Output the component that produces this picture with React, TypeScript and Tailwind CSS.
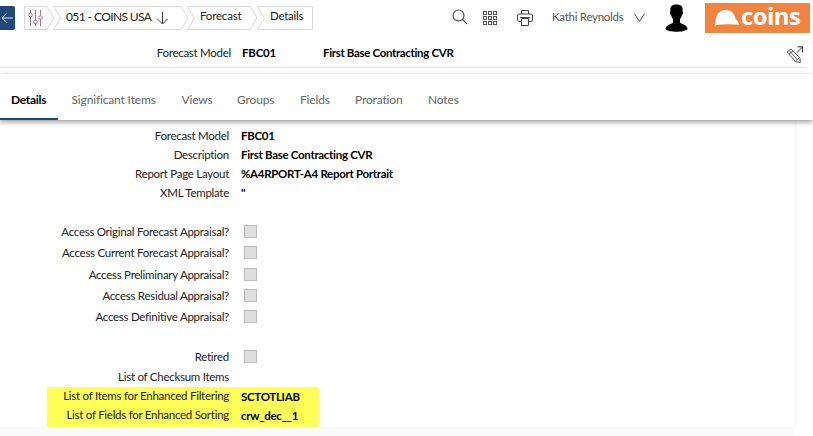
import React from "react";

const tabs = [
  { name: "Significant Items", cls: "w-[110px]" },
  { name: "Views", cls: "w-[55.5px]" },
  { name: "Groups", cls: "w-[63px]" },
  { name: "Fields", cls: "w-[55px]" },
  { name: "Proration", cls: "w-[73px]" },
  { name: "Notes", cls: "w-14" },
];

const details = [
  ["Forecast Model", "FBC01"],
  ["Description", "First Base Contracting CVR"],
  ["Report Page Layout", "%A4RPORT-A4 Report Portrait"],
  ["XML Template", '"'],
];

const access = [
  "Access Original Forecast Appraisal?",
  "Access Current Forecast Appraisal?",
  "Access Preliminary Appraisal?",
  "Access Residual Appraisal?",
  "Access Definitive Appraisal?",
];

function Label({ children }: { children: React.ReactNode }) {
  return <div className="w-[229px] shrink-0 text-right text-[#222]">{children}</div>;
}

function Box() {
  return <div className="ml-[15px] size-[13px] border border-[#bbb] bg-[#dedede]" />;
}

function Breadcrumbs() {
  return (
    <div className="relative ml-[9px] h-6 w-[290px] shrink-0 leading-6 text-[#222]">
      <svg className="absolute inset-0" width="290" height="24" fill="none" stroke="#d8d8d8">
        <path d="M23 .5H.5v23H23M29.500 .5H157M29.500 23.500H157M163.500 .5H226M163.500 23.500H226M233.500 .5H288.500v23H233.500" />
        <path d="M23 .5l7 11.500-7 11.500M29.500 .5l7 11.500-7 11.500M157 .5l7 11.500-7 11.500M163.500 .5l7 11.500-7 11.500M226 .5l7 11.500-7 11.500M233.500 .5l7 11.500-7 11.500" />
      </svg>
      <svg className="absolute left-1 top-1" width="16" height="16" fill="none" stroke="#a5718b">
        <path d="M2.500 0v3M2.500 7v9M7.500 0v10M7.500 14v2M12.500 0v5M12.500 9v7" />
        <circle cx="2.500" cy="5" r="1.800" /><circle cx="7.500" cy="12" r="1.800" /><circle cx="12.500" cy="7.500" r="1.800" />
      </svg>
      <div className="relative -top-[2px] flex whitespace-nowrap">
        <span className="ml-[42px] w-[91px] pt-px text-[12px] tracking-[-.6px]">051 - COINS USA</span>
        <svg className="mt-[8px] w-[11px]" width="11" height="13" fill="none" stroke="#444"><path d="M5.500 0v12M.5 7l5 5 5-5" /></svg>
        <span className="ml-8 w-[70px] tracking-[-.18px]">Forecast</span>
        <span className="tracking-[-.24px]">Details</span>
      </div>
    </div>
  );
}

export default function App() {
  return (
    <div className="h-[436px] w-[813px] overflow-hidden bg-white font-['Lato',sans-serif] text-[11.5px] tracking-[-.27px]">
      <header className="flex h-[37px] pt-[6px]">
        <div className="flex h-6 w-[15px] shrink-0 items-center rounded-r-[2px] bg-[#1f497d]">
          <svg className="ml-px" width="12" height="12" fill="none" stroke="#d5e1ee"><path d="M12 6H1M6 1L1 6l5 5" /></svg>
        </div>
        <Breadcrumbs />
        <svg className="ml-[138px] mt-[3px] shrink-0" width="16" height="17" fill="none" stroke="#444" strokeWidth="1.100"><circle cx="6.500" cy="6.500" r="5.500" /><path d="M10.500 10.500l4.500 4.500" /></svg>
        <svg className="ml-[15px] mt-[5px] shrink-0" width="15" height="15" fill="none" stroke="#555">
          {[0, 5, 10].map((y) => [0, 5, 10].map((x) => <rect key={`${x}-${y}`} x={x + 0.5} y={y + 0.5} width="3" height="3" />))}
        </svg>
        <svg className="ml-[19px] mt-1 shrink-0" width="16" height="16" fill="none" stroke="#444">
          <path d="M4.500 4V.5h7V4M4.500 11.500h-3L.5 10V5l1-1h13l1 1v5l-1 1.500h-3M3 7.500h10" /><path d="M4.500 8.500h7v7h-7z" fill="white" />
        </svg>
        <span className="ml-[19px] w-[82px] shrink-0 pt-[2px] text-[#555]">Kathi Reynolds</span>
        <svg className="mt-[7px] shrink-0" width="12" height="10" fill="none" stroke="#555"><path d="M.5 .5l5 8 5-8" /></svg>
        <svg className="-mt-[2px] ml-[19px] shrink-0" width="24" height="28" fill="#000">
          <path d="M11.500 .5C6.500 .5 4.900 3 5.400 7.500c-1 .5-.3 3.300.7 3.600.4 1.900 1 2.900 1.900 3.900v3.500C6 20.500 1.200 20.500.4 25c2 2.200 6.800 2.700 11.100 2.700S20.600 27.200 22.600 25c-.8-4.500-5.600-4.500-7.600-6.500V15c.9-1 1.500-2 1.900-3.900 1-.3 1.700-3.100.7-3.600.5-4.500-1.100-7-6.100-7z" />
        </svg>
        <div className="-mt-[3px] ml-[16px] flex h-[30px] w-[105px] shrink-0 bg-[#f28440]">
          <svg className="ml-[9px] mt-[7px] shrink-0" width="26" height="16" fill="white">
            <path d="M0 15.400l1.500-2C1.300 5.500 5 0 11.500 0 17 0 20.500 3 21.300 8.500c1.200 1 2.700 3 4.200 6.300-8-1-17-.9-25.500.6z" />
          </svg>
          <span className="ml-[1px] mt-[-2px] font-['Open_Sans',sans-serif] text-[24px] font-bold leading-[30px] tracking-[-.6px] text-white">coins</span>
        </div>
      </header>

      <div className="flex h-[31px] w-[807px] border-b border-[#e4e4e4] pt-[7px]">
        <span className="w-[231px] text-right text-[#222]">Forecast Model</span>
        <b className="ml-[11px] w-[81px] tracking-[-.2px]">FBC01</b>
        <b className="tracking-[-.33px]">First Base Contracting CVR</b>
        <svg className="ml-auto mr-[3px] mt-[2px] shrink-0" width="18" height="18" fill="none" stroke="#333">
          <path d="M11.500 .8h5V6.500M16.500 .8L11 6.500" />
          <path d="M1 6l4-3 9 9 .3 4.500-4.800-.8zM3 8l4-3M3.500 5l8 8.500M9.500 15l4-3.500" strokeWidth=".8" />
        </svg>
      </div>

      <div className="relative mt-[6px] flex h-[46px] border-t border-[#fbfbfb] bg-white pt-4 text-[12px] tracking-[-.15px] text-[#666] shadow-[0_2px_5px_rgba(0,0,0,.4)]">
        <div className="-mt-4 mr-[13.5px] w-[58px] border-b-2 border-[#1f497d] pl-[11px] pt-4 font-bold tracking-[-.3px] text-black">Details</div>
        {tabs.map((t) => <span key={t.name} className={`${t.cls} shrink-0`}>{t.name}</span>)}
      </div>

      <main className="h-[308px] w-[797px] border-r-[3px] border-[#fafafa] pt-[6px] leading-[19px]">
        {details.map(([label, value]) => (
          <div key={label} className="flex h-[19px]"><Label>{label}</Label><b className="ml-3 tracking-[-.3px]">{value}</b></div>
        ))}
        <div className="mt-[19px]">
          {access.map((label) => <div key={label} className="flex h-[21.3px] items-center"><Label>{label}</Label><Box /></div>)}
        </div>
        <div className="mt-[18.500px] flex h-[22px] items-center"><Label>Retired</Label><Box /></div>
        <div className="flex h-[19.500px]"><Label><span className="relative -top-px">List of Checksum Items</span></Label></div>
        <div className="ml-[47px] h-10 w-[272px] bg-[#ffff57]">
          <div className="-ml-[47px] flex h-[19px]"><Label><span className="relative -top-px">List of Items for Enhanced Filtering</span></Label><b className="ml-3 tracking-[-.3px]">SCTOTLIAB</b></div>
          <div className="-ml-[47px] flex h-[19px]"><Label><span className="relative -top-px">List of Fields for Enhanced Sorting</span></Label><b className="ml-3 tracking-[-.3px]">crw_dec__1</b></div>
        </div>
        <div className="h-3 bg-[#fafafa]" />
      </main>
    </div>
  );
}
